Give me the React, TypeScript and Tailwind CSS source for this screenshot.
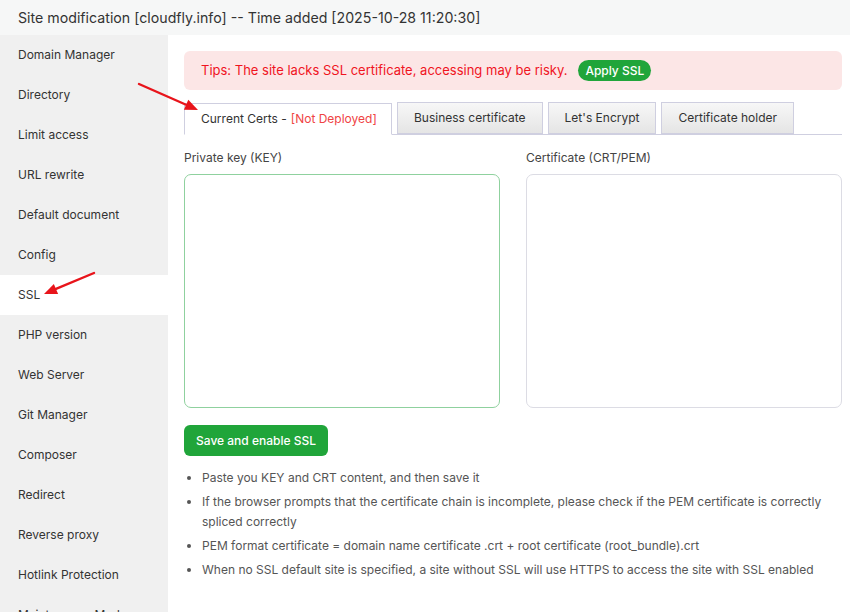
const FONT = { fontFamily: 'Inter, "Noto Sans", sans-serif' }

const MENU = [
  'Domain Manager', 'Directory', 'Limit access', 'URL rewrite', 'Default document', 'Config',
  'SSL', 'PHP version', 'Web Server', 'Git Manager', 'Composer', 'Redirect', 'Reverse proxy',
  'Hotlink Protection', 'Maintenance Mode',
]

const TABS = ['Business certificate', "Let's Encrypt", 'Certificate holder']

const TIPS = [
  'Paste you KEY and CRT content, and then save it',
  'If the browser prompts that the certificate chain is incomplete, please check if the PEM certificate is correctly spliced correctly',
  'PEM format certificate = domain name certificate .crt + root certificate (root_bundle).crt',
  'When no SSL default site is specified, a site without SSL will use HTTPS to access the site with SSL enabled',
]

function Arrow({ x1, y1, x2, y2 }: { x1: number; y1: number; x2: number; y2: number }) {
  const a = Math.atan2(y2 - y1, x2 - x1)
  const len = 13, w = 5.5
  const bx = x2 - Math.cos(a) * len, by = y2 - Math.sin(a) * len
  const px = -Math.sin(a) * w, py = Math.cos(a) * w
  return (
    <g>
      <line x1={x1} y1={y1} x2={bx} y2={by} stroke="#e8141b" strokeWidth="2.4" strokeLinecap="round" />
      <polygon points={`${x2},${y2} ${bx + px},${by + py} ${bx - px},${by - py}`} fill="#e8141b" />
    </g>
  )
}

export default function App() {
  return (
    <div className="relative w-[850px] h-[612px] overflow-hidden bg-white text-[#333]" style={FONT}>
      {/* title bar */}
      <div className="h-[35px] flex items-center px-[18px] pt-[1px] bg-[#f6f7f7] text-[14.2px] text-[#333]">
        Site modification [cloudfly.info] -- Time added [2025-10-28 11:20:30]
      </div>

      <div className="flex h-[577px]">
        {/* sidebar */}
        <div className="w-[168px] shrink-0 bg-[#f0f0f0] flex flex-col">
          {MENU.map(m => (
            <div
              key={m}
              className={`h-[40px] shrink-0 flex items-center pl-[18px] text-[12px] text-[#333] ${m === 'SSL' ? 'bg-white' : ''}`}
            >
              {m}
            </div>
          ))}
        </div>

        {/* main */}
        <div className="flex-1 pl-[16px] pr-[8px] pt-[16px]">
          <div className="h-[39px] rounded-[6px] bg-[#fce6e6] flex items-center px-[17px] gap-[11px]">
            <span className="text-[13px] text-[#f0141e]">Tips: The site lacks SSL certificate, accessing may be risky.</span>
            <span className="h-[21px] px-[7px] rounded-full bg-[#20a53a] text-white text-[12px] font-medium flex items-center">Apply SSL</span>
          </div>

          {/* tabs */}
          <div className="mt-[13px] flex items-end gap-[5px] border-b border-[#cfcfe0] h-[32px]">
            <div className="h-[32px] -mb-px w-[208px] bg-white border border-b-white border-[#cfcfe0] flex items-center pl-[16px] text-[12px] text-[#333]">
              Current Certs - <span className="ml-[4px] text-[#ef4444]">[Not Deployed]</span>
            </div>
            {TABS.map(t => (
              <div key={t} className="h-[32px] px-[16px] border border-[#cfcfe0] bg-gradient-to-b from-[#f7f7f7] to-[#e5e5e5] flex items-center text-[12px] text-[#333]">
                {t}
              </div>
            ))}
          </div>

          {/* fields */}
          <div className="mt-[15px] flex gap-[26px]">
            <div className="w-[316px]">
              <div className="text-[12px] text-[#444] leading-[16px]">Private key (KEY)</div>
              <textarea className="mt-[8px] block w-full h-[234px] rounded-[7px] border border-[#8fd19e] resize-none outline-none" />
            </div>
            <div className="flex-1">
              <div className="text-[12px] text-[#444] leading-[16px]">Certificate (CRT/PEM)</div>
              <textarea className="mt-[8px] block w-full h-[234px] rounded-[7px] border border-[#dcdce4] resize-none outline-none" />
            </div>
          </div>

          <button className="mt-[17px] h-[31px] px-[12px] rounded-[6px] bg-[#20a53a] text-white text-[12px] font-medium">
            Save and enable SSL
          </button>

          <ul className="mt-[12px] flex flex-col gap-[4px] pl-[18px] list-disc text-[12px] leading-[20px] text-[#555] marker:text-[#555]">
            {TIPS.map(t => <li key={t}>{t}</li>)}
          </ul>
        </div>
      </div>

      {/* annotation arrows */}
      <svg className="absolute inset-0 pointer-events-none" width="850" height="612">
        <Arrow x1={139} y1={84} x2={198} y2={110} />
        <Arrow x1={94} y1={273} x2={44} y2={294} />
      </svg>
    </div>
  )
}
